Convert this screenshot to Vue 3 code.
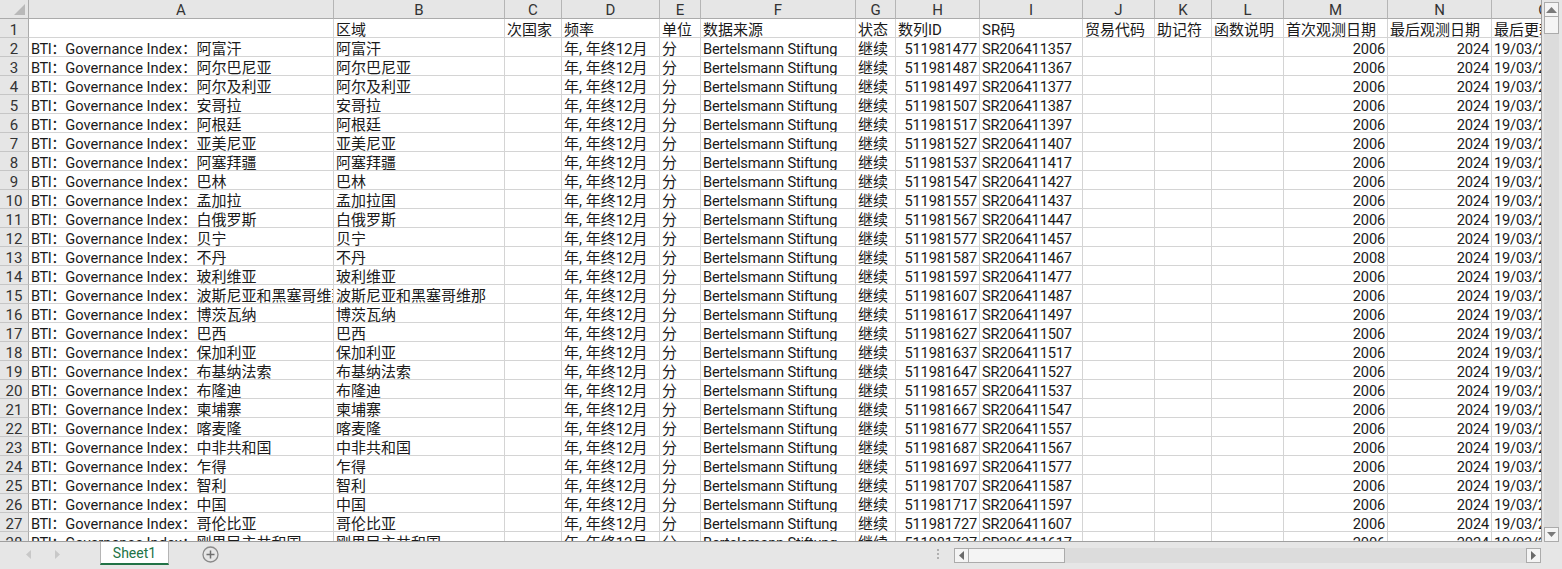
<script setup>
const columns = [
  { name: 'A', width: 305 }, { name: 'B', width: 171 }, { name: 'C', width: 57 },
  { name: 'D', width: 98 }, { name: 'E', width: 41 }, { name: 'F', width: 155 },
  { name: 'G', width: 40 }, { name: 'H', width: 84 }, { name: 'I', width: 103 },
  { name: 'J', width: 72 }, { name: 'K', width: 57 }, { name: 'L', width: 72 },
  { name: 'M', width: 104 }, { name: 'N', width: 104 }, { name: 'O', width: 104 }
]
const headers = ['', '区域', '次国家', '频率', '单位', '数据来源', '状态', '数列ID', 'SR码', '贸易代码', '助记符', '函数说明', '首次观测日期', '最后观测日期', '最后更新时间']
const countries = [
  ['阿富汗'], ['阿尔巴尼亚'], ['阿尔及利亚'], ['安哥拉'], ['阿根廷'], ['亚美尼亚'], ['阿塞拜疆'], ['巴林'],
  ['孟加拉', '孟加拉国'], ['白俄罗斯'], ['贝宁'], ['不丹'], ['玻利维亚'], ['波斯尼亚和黑塞哥维那'], ['博茨瓦纳'],
  ['巴西'], ['保加利亚'], ['布基纳法索'], ['布隆迪'], ['柬埔寨'], ['喀麦隆'], ['中非共和国'], ['乍得'], ['智利'],
  ['中国'], ['哥伦比亚'], ['刚果民主共和国']
]
const rows = countries.map(([name, region], i) => ({
  num: i + 2,
  name,
  b: region || name,
  id: 511981477 + i * 10,
  sr: `SR${206411357 + i * 10}`,
  first: i === 11 ? 2008 : 2006
}))
</script>

<template>
  <div class="excel">
    <div class="sheet">
      <div class="grid">
        <table>
          <colgroup>
            <col class="rowhead-col" />
            <col v-for="c in columns" :key="c.name" :style="{ width: c.width + 'px' }" />
          </colgroup>
          <thead>
            <tr>
              <th class="corner"><svg width="28" height="18" viewBox="0 0 28 18"><path d="M25 4V15H14Z" fill="#b9b9b9" /></svg></th>
              <th v-for="c in columns" :key="c.name" class="colhead"><div class="h">{{ c.name }}</div></th>
            </tr>
          </thead>
          <tbody>
            <tr>
              <th class="rowhead"><div class="h">1</div></th>
              <td v-for="(h, i) in headers" :key="i"><div class="c">{{ h }}</div></td>
            </tr>
            <tr v-for="r in rows" :key="r.num">
              <th class="rowhead"><div class="h">{{ r.num }}</div></th>
              <td><div class="c"><span class="lat-a"><span class="bti">BTI：</span><span class="gap1"> </span>Governance Index：</span><span class="gap2"> </span>{{ r.name }}</div></td>
              <td><div class="c">{{ r.b }}</div></td>
              <td></td>
              <td><div class="c">年, 年终12月</div></td>
              <td><div class="c">分</div></td>
              <td><div class="c lat">Bertelsmann Stiftung</div></td>
              <td><div class="c">继续</div></td>
              <td><div class="c num lat">{{ r.id }}</div></td>
              <td><div class="c lat">{{ r.sr }}</div></td>
              <td></td>
              <td></td>
              <td></td>
              <td><div class="c num lat">{{ r.first }}</div></td>
              <td><div class="c num lat">2024</div></td>
              <td><div class="c lat">19/03/2024</div></td>
            </tr>
          </tbody>
        </table>
      </div>
      <div class="vscroll">
        <button class="sbtn vbtn"><svg width="11" height="6" viewBox="0 0 11 6"><path d="M5.500 0 11 6H0Z" fill="#7a7a7a" /></svg></button>
        <div class="vthumb"></div>
        <div class="vtrack"></div>
        <button class="sbtn vbtn"><svg width="9" height="5" viewBox="0 0 9 5"><path d="M0 0H9L4.500 5Z" fill="#7a7a7a" /></svg></button>
      </div>
    </div>
    <div class="tabbar">
      <div class="tabnav">
        <svg width="6" height="9" viewBox="0 0 6 9"><path d="M5 0V9L0 4.500Z" fill="#c8c8c8" /></svg>
        <svg width="6" height="9" viewBox="0 0 6 9"><path d="M0 0V9L5 4.500Z" fill="#c8c8c8" /></svg>
      </div>
      <div class="tab">Sheet1</div>
      <svg class="addsheet" width="17" height="17" viewBox="0 0 17 17">
        <circle cx="8.500" cy="8.500" r="7.500" fill="none" stroke="#8a8a8a" stroke-width="1.300" />
        <path d="M8.500 4.500v8M4.500 8.500h8" stroke="#6f6f6f" stroke-width="1.500" />
      </svg>
      <div class="spacer"></div>
      <div class="dots"><i></i><i></i><i></i></div>
      <div class="hscroll">
        <button class="sbtn hbtn"><svg width="5" height="9" viewBox="0 0 5 9"><path d="M5 0V9L0 4.500Z" fill="#6a6a6a" /></svg></button>
        <div class="hthumb"></div>
        <div class="htrack"></div>
        <button class="sbtn hbtn"><svg width="5" height="9" viewBox="0 0 5 9"><path d="M0 0V9L5 4.500Z" fill="#6a6a6a" /></svg></button>
      </div>
    </div>
  </div>
</template>

<style scoped>
.excel {
  width: 1562px;
  height: 569px;
  display: flex;
  flex-direction: column;
  background: #e6e6e6;
  font-family: Roboto, "Noto Sans CJK SC", sans-serif;
  font-size: 15px;
  color: #1a1a1a;
  overflow: hidden;
}
.sheet {
  height: 542px;
  display: flex;
  flex: none;
}
.grid {
  width: 1542px;
  flex: none;
  box-sizing: border-box;
  overflow: hidden;
  background: #fff;
  border-right: 1px solid #9f9f9f;
  border-bottom: 1px solid #9f9f9f;
}
table {
  table-layout: fixed;
  border-collapse: separate;
  border-spacing: 0;
  width: 1596px;
}
.rowhead-col {
  width: 29px;
}
tr {
  height: 19px;
}
th {
  padding: 0;
  font-weight: 400;
  background: #e6e6e6;
  color: #333;
  text-align: center;
  vertical-align: top;
  box-sizing: border-box;
}
.h {
  height: 18px;
  line-height: 20px;
  overflow: hidden;
}
.rowhead .h {
  line-height: 22px;
}
.corner {
  height: 19px;
  border-right: 1px solid #ababab;
  border-bottom: 1px solid #ababab;
  line-height: 0;
}
.colhead {
  border-right: 1px solid #b5b5b5;
  border-bottom: 1px solid #ababab;
  height: 19px;
}
.rowhead {
  border-right: 1px solid #ababab;
  border-bottom: 1px solid #c6c6c6;
  height: 19px;
}
td {
  box-sizing: border-box;
  height: 19px;
  padding: 0;
  vertical-align: top;
  border-right: 1px solid #d4d4d4;
  border-bottom: 1px solid #d4d4d4;
  background: #fff;
}
.c {
  height: 18px;
  padding: 0 2px;
  line-height: 22px;
  white-space: nowrap;
  overflow: hidden;
}
.lat {
  font-size: 14.67px;
  letter-spacing: -0.18px;
}
.lat-a {
  font-size: 14.67px;
}
.bti {
  letter-spacing: -0.5px;
}
.gap1 {
  word-spacing: -3px;
}
.gap2 {
  word-spacing: 5.5px;
}
.num {
  text-align: right;
}
.vscroll {
  width: 20px;
  flex: none;
  display: flex;
  flex-direction: column;
  padding: 2px 3px 0 2px;
  box-sizing: border-box;
  background: #e6e6e6;
}
.sbtn {
  padding: 0;
  margin: 0;
  display: flex;
  align-items: center;
  justify-content: center;
  background: #f4f4f4;
  border: 1px solid #ababab;
  box-sizing: border-box;
  flex: none;
}
.vbtn {
  width: 15px;
  height: 15px;
}
.vthumb {
  width: 15px;
  height: 17px;
  background: #f4f4f4;
  border: 1px solid #ababab;
  border-top: 0;
  box-sizing: border-box;
  flex: none;
}
.vtrack {
  flex: 1;
  width: 15px;
  background: #dcdcdc;
}
.tabbar {
  flex: 1;
  display: flex;
  align-items: flex-start;
  background: #e6e6e6;
}
.tabnav {
  width: 100px;
  flex: none;
  display: flex;
  gap: 23px;
  padding: 8px 0 0 26px;
  box-sizing: border-box;
}
.tab {
  width: 69px;
  height: 23px;
  flex: none;
  box-sizing: border-box;
  background: #fff;
  border: 1px solid #b5b5b5;
  border-top: 0;
  border-bottom: 2px solid #217346;
  color: #217346;
  font-size: 14px;
  line-height: 22px;
  text-align: center;
}
.addsheet {
  flex: none;
  margin: 4px 0 0 33px;
}
.spacer {
  flex: 1;
}
.dots {
  display: flex;
  flex-direction: column;
  gap: 2px;
  margin: 7px 15px 0 0;
}
.dots i {
  display: block;
  width: 2px;
  height: 2px;
  background: #b0b0b0;
}
.hscroll {
  display: flex;
  width: 587px;
  height: 15px;
  margin: 6px 21px 0 0;
  flex: none;
}
.hbtn {
  width: 15px;
  height: 15px;
}
.hthumb {
  width: 96px;
  height: 15px;
  flex: none;
  background: #f4f4f4;
  border: 1px solid #ababab;
  border-left: 0;
  box-sizing: border-box;
}
.htrack {
  flex: 1;
  background: #dcdcdc;
}
</style>

<style>
html, body {
  margin: 0;
  overflow: hidden;
}
</style>
